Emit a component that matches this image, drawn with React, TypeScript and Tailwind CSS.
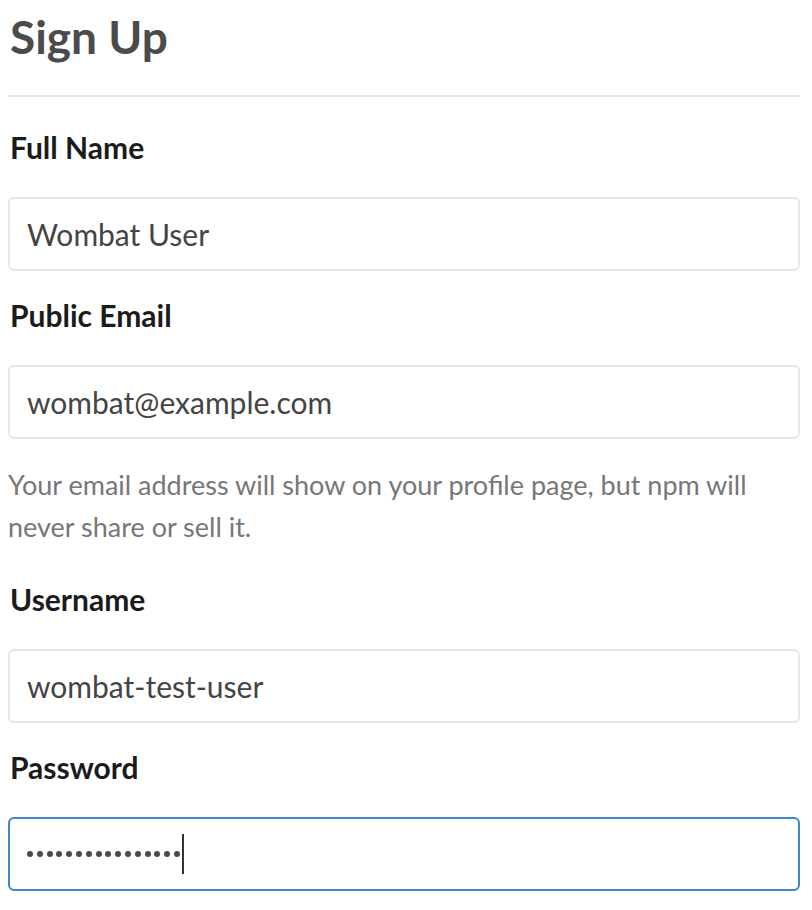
import React from "react";

const font = { fontFamily: "Lato, 'Open Sans', sans-serif" };

const labelCls = "block text-[30px] leading-[40px] font-bold text-[#1b1b1b] pl-[2px]";
const inputCls =
  "mt-[29px] block w-full h-[74px] rounded-[6px] border-2 border-[#e6e6e6] px-[17px] text-[30px] text-[#444] outline-none bg-white";

export default function App() {
  return (
    <div className="bg-white w-[812px] h-[910px] overflow-hidden pl-[8px] pr-[12px]" style={font}>
      <h1 className="text-[46px] leading-[74px] font-bold text-[#4b4b4b] pl-[2px]">Sign Up</h1>
      <hr className="mt-[21px] border-0 h-[2px] bg-[#e5e5e5]" />
      <div className="mt-[30px]">
        <label className={labelCls}>Full Name</label>
        <input readOnly value="Wombat User" className={`${inputCls} mt-[30px]`} />
      </div>
      <div className="mt-[24px]">
        <label className={labelCls}>Public Email</label>
        <input readOnly value="wombat@example.com" className={`${inputCls} mt-[30px]`} />
        <p className="mt-[25px] max-w-[760px] text-[27px] leading-[42px] text-[#777]">
          Your email address will show on your profile page, but npm will never share or sell it.
        </p>
      </div>
      <div className="mt-[31px]">
        <label className={labelCls}>Username</label>
        <input readOnly value="wombat-test-user" className={`${inputCls} mt-[30px]`} />
      </div>
      <div className="mt-[24px]">
        <label className={labelCls}>Password</label>
        <div className="mt-[30px] flex items-center w-full h-[74px] rounded-[6px] border-2 border-[#3f87c8] px-[17px] bg-white">
          <div className="flex items-center gap-[3.8px]">
            {Array.from({ length: 16 }).map((_, i) => (
              <span key={i} className="block w-[6px] h-[6px] rounded-full bg-[#4a4a4a]" />
            ))}
          </div>
          <span className="block ml-[2px] w-[2px] h-[40px] bg-[#333]" />
        </div>
      </div>
    </div>
  );
}
